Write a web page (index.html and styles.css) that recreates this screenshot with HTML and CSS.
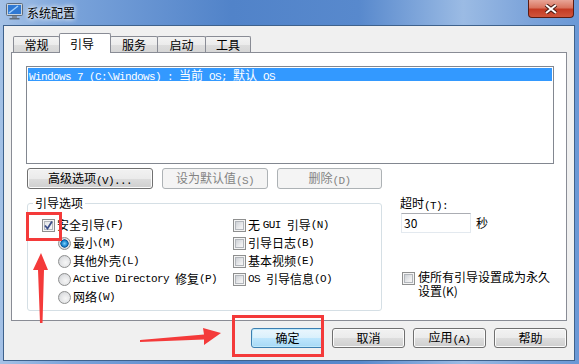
FILE: index.html
```html
<!DOCTYPE html>
<html lang="zh-CN">

<head>
    <meta charset="UTF-8">
    <title>系统配置</title>
    <link rel="stylesheet" href="styles.css">
</head>

<body>
    <div class="window">
        <div class="titlebar">
            <svg class="app-icon" viewBox="0 0 19 17" width="19" height="17">
                <rect x="1.5" y="0.5" width="16" height="12" rx="1" fill="#c9d3de" stroke="#5e6c7c" />
                <rect x="3" y="2" width="13" height="9" fill="#2f78d2" />
                <path d="M4 10 L13 3" stroke="#9fd0ff" stroke-width="1.5" />
                <rect x="7" y="13" width="5" height="2" fill="#7d8896" />
                <rect x="4.5" y="15" width="10" height="1.5" fill="#5e6c7c" />
            </svg>
            <span class="title">系统配置</span>
            <div class="close">
                <svg viewBox="0 0 14 10" width="14" height="10">
                    <path d="M2 1 L12 9 M12 1 L2 9" stroke="#4a1a12" stroke-width="4" />
                    <path d="M2 1 L12 9 M12 1 L2 9" stroke="#fff" stroke-width="2" />
                </svg>
            </div>
        </div>

        <div class="client">
            <!-- 选项卡 -->
            <div class="tabs">
                <div class="tab t1">常规</div>
                <div class="tab t2 active">引导</div>
                <div class="tab t3">服务</div>
                <div class="tab t4">启动</div>
                <div class="tab t5">工具</div>
            </div>

            <div class="panel">
                <div class="listbox">
                    <div class="item selected">Windows 7 (C:\Windows) : <span class="cjk">当前</span> OS; <span class="cjk">默认</span> OS</div>
                </div>

                <div class="btn-row">
                    <button class="btn b-adv">高级选项<span class="m">(V)...</span></button>
                    <button class="btn b-def" disabled>设为默认值<span class="m">(S)</span></button>
                    <button class="btn b-del" disabled>删除<span class="m">(D)</span></button>
                </div>

                <div class="lower">
                    <!-- 引导选项 -->
                    <fieldset class="group">
                        <legend>引导选项</legend>
                        <div class="cols">
                            <div class="col1">
                                <div class="opt"><span class="cb checked">
                                        <svg viewBox="0 0 13 13" width="13" height="13">
                                            <path d="M3 6.5 L5.5 9.5 L10 2.5" fill="none" stroke="#3c4f8a" stroke-width="1.8" />
                                        </svg>
                                    </span>安全引导<span class="m">(F)</span></div>
                                <div class="opt sub"><span class="rb on"></span>最小<span class="m">(M)</span></div>
                                <div class="opt sub"><span class="rb"></span>其他外壳<span class="m">(L)</span></div>
                                <div class="opt sub"><span class="rb"></span><span class="m">Active Directory </span>修复<span class="m">(P)</span></div>
                                <div class="opt sub"><span class="rb"></span>网络<span class="m">(W)</span></div>
                            </div>
                            <div class="col2">
                                <div class="opt"><span class="cb"></span>无 <span class="m">GUI </span>引导<span class="m">(N)</span></div>
                                <div class="opt"><span class="cb"></span>引导日志<span class="m">(B)</span></div>
                                <div class="opt"><span class="cb"></span>基本视频<span class="m">(E)</span></div>
                                <div class="opt"><span class="cb"></span><span class="m">OS </span>引导信息<span class="m">(O)</span></div>
                            </div>
                        </div>
                    </fieldset>

                    <div class="side">
                        <div class="label">超时<span class="m">(T):</span></div>
                        <div class="timeout">
                            <div class="input">30</div>
                            <span class="unit">秒</span>
                        </div>
                        <div class="perm">
                            <span class="cb"></span>
                            <span class="perm-text">使所有引导设置成为永久设置(K)</span>
                        </div>
                    </div>
                </div>
            </div>

            <div class="actions">
                <button class="btn act default">确定</button>
                <button class="btn act">取消</button>
                <button class="btn act">应用<span class="m">(A)</span></button>
                <button class="btn act">帮助</button>
            </div>
        </div>

        <!-- 红色标注 -->
        <svg class="marks" viewBox="0 0 579 364" width="579" height="364">
            <rect x="27.5" y="213.5" width="33" height="26" fill="none" stroke="#f43a3a" stroke-width="3" />
            <rect x="233.5" y="316.5" width="89" height="39" fill="none" stroke="#f43a3a" stroke-width="3" />
            <polygon points="41,253 48,270 44,270 42.5,323 40,323 38,270 33,270" fill="#f43a3a" />
            <polygon points="140,340 204,334.5 203,328 221,333 204,345 204,339.5 140,342" fill="#f43a3a" />
        </svg>
    </div>
</body>

</html>
```

FILE: styles.css
```css
* {
    margin: 0;
    padding: 0;
    box-sizing: border-box;
}

body {
    font: 12px/14px "Noto Sans CJK SC", "Liberation Sans", sans-serif;
    color: #000;
    background: #6f9bd6;
}

.m {
    font-family: "Liberation Mono", monospace;
    font-size: 11px;
    letter-spacing: -0.6px;
    vertical-align: -1px;
}

.window {
    position: relative;
    width: 579px;
    height: 364px;
    overflow: hidden;
    background: linear-gradient(to right, #a4c1e6 0%, #7aa3da 12%, #5183c9 40%, #5889cd 62%, #9bbbe4 80%, #7aa2d9 92%, #6a98d6 100%);
}

/* 标题栏 */
.titlebar {
    height: 25px;
    display: flex;
    align-items: flex-start;
}

.app-icon {
    margin: 3px 0 0 5px;
}

.title {
    margin: 6px 0 0 3px;
    text-shadow: 0 0 4px #fff, 0 0 6px #fff;
}

.close {
    margin-left: auto;
    margin-right: 5px;
    width: 46px;
    height: 18px;
    border: 1px solid #5a1c14;
    border-top: none;
    border-radius: 0 0 4px 4px;
    background: linear-gradient(#e8a597 0%, #d9745f 45%, #c43b24 55%, #d0553c 100%);
    display: flex;
    align-items: center;
    justify-content: center;
}

.client {
    margin-left: 3px;
    width: 572px;
    height: 336px;
    border: 1px solid #3f628c;
    background: #f0f0f0;
    padding-top: 7px;
}

/* 选项卡 */
.tabs {
    display: flex;
    align-items: flex-end;
    height: 20px;
    margin-left: 9px;
}

.tab {
    height: 17px;
    margin-right: -1px;
    border: 1px solid #898c95;
    border-bottom: none;
    border-radius: 2px 2px 0 0;
    background: linear-gradient(#f3f3f3, #ebebeb 50%, #dddddd 50%, #d5d5d5);
    text-align: center;
    line-height: 15px;
}

.t1 { width: 47px; }
.t2 { width: 52px; }
.t3 { width: 48px; }
.t4 { width: 49px; }
.t5 { width: 46px; }

.tab.active {
    position: relative;
    z-index: 2;
    height: 20px;
    background: #fff;
    padding-right: 6px;
    line-height: 19px;
}

.panel {
    position: relative;
    margin: -1px 0 0 7px;
    width: 556px;
    height: 269px;
    border: 1px solid #898c95;
    background: #fff;
    padding: 13px 12px 0 14px;
}

.listbox {
    height: 98px;
    border: 1px solid #828790;
    padding: 1px;
}

.item {
    height: 13px;
    line-height: 13px;
    padding-left: 1px;
    font-family: "Liberation Mono", monospace;
    font-size: 11px;
    letter-spacing: -0.6px;
    white-space: pre;
}

.item .cjk {
    font-family: "Noto Sans CJK SC", sans-serif;
    font-size: 12px;
    letter-spacing: 0;
}

.item.selected {
    background: #3399ff;
    color: #fff;
}

/* 按钮 */
.btn {
    font: inherit;
    color: #000;
    height: 21px;
    border: 1px solid #707070;
    border-radius: 3px;
    background: linear-gradient(#f2f2f2 0%, #ebebeb 50%, #dddddd 50%, #cfcfcf 100%);
    box-shadow: inset 0 0 0 1px #fbfbfb;
    line-height: 17px;
}

.btn:disabled {
    color: #838383;
    border-color: #adb2b5;
    background: #f4f4f4;
    box-shadow: none;
}

.btn-row {
    display: flex;
    gap: 9px;
    margin: 4px 0 0 1px;
}

.b-adv { width: 126px; }
.b-def { width: 106px; }
.b-del { width: 105px; }

.lower {
    display: flex;
    margin-top: 7px;
}

.group {
    margin-left: 1px;
    width: 355px;
    border: 1px solid #d5dfe5;
    border-radius: 3px;
}

.group legend {
    margin-left: 5px;
    padding: 0 2px;
    line-height: 14px;
}

.cols {
    display: flex;
    padding: 6px 0 4px 14px;
}

.col1 {
    width: 191px;
}

.opt {
    display: flex;
    align-items: center;
    height: 18px;
    white-space: pre;
}

.opt.sub {
    padding-left: 16px;
}

/* 复选框 */
.cb {
    position: relative;
    flex: none;
    width: 13px;
    height: 13px;
    margin-right: 2px;
    border: 1px solid #8e8f8f;
    background: #f4f4f4;
}

.cb::after {
    content: "";
    position: absolute;
    inset: 1px;
    border: 1px solid #b2b6bb;
    background: linear-gradient(135deg, #cdd1d6, #eeeeef 70%, #f6f6f6);
}

.cb.checked::after {
    background: linear-gradient(135deg, #e4e6e9, #f8f8f8);
}

.cb svg {
    position: absolute;
    top: -1px;
    left: -1px;
    z-index: 1;
}

/* 单选框 */
.rb {
    flex: none;
    width: 13px;
    height: 13px;
    margin-right: 2px;
    border: 1px solid #8e8f8f;
    border-radius: 50%;
    background: radial-gradient(circle at 60% 60%, #f6f6f6 0%, #e2e3e5 55%, #c2c5c9 100%);
}

.rb.on {
    background: radial-gradient(circle at 50% 50%, #7fd3fb 0%, #1b86d1 35%, #0c4f8f 50%, #e2e3e5 56%, #c5c8cc 100%);
}

.side {
    margin-left: 18px;
}

.label {
    line-height: 14px;
}

.timeout {
    display: flex;
    align-items: center;
    margin-left: 1px;
}

.input {
    width: 70px;
    height: 20px;
    border: 1px solid #e3e9ef;
    border-top-color: #abadb3;
    background: #fff;
    padding-left: 2px;
    line-height: 18px;
}

.unit {
    margin-left: 5px;
}

.perm {
    display: flex;
    align-items: flex-start;
    margin: 37px 0 0 2px;
}

.perm .cb {
    margin-top: 2px;
    margin-right: 3px;
}

.perm-text {
    width: 136px;
    line-height: 14px;
}

/* 底部按钮 */
.actions {
    display: flex;
    justify-content: flex-end;
    gap: 8px;
    margin-top: 7px;
    padding-right: 7px;
}

.act {
    width: 73px;
    height: 20px;
    line-height: 16px;
}

.act.default {
    border-color: #3c7fb1;
    background: linear-gradient(#eaf6fd 0%, #d9f0fc 50%, #bee6fd 50%, #a7d9f5 100%);
    box-shadow: inset 0 0 0 1px #bfe9fb;
}

.marks {
    position: absolute;
    top: 0;
    left: 0;
    pointer-events: none;
}
```
